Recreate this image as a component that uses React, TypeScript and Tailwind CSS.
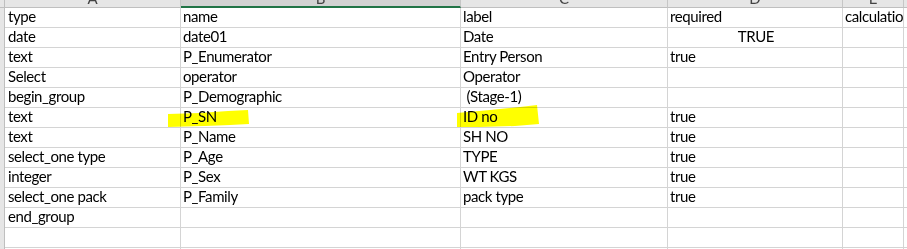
import React from "react";

const rows: [string, string, string, string, string][] = [
  ["type", "name", "label", "required", "calculation"],
  ["date", "date01", "Date", "TRUE", ""],
  ["text", "P_Enumerator", "Entry Person", "true", ""],
  ["Select", "operator", "Operator", "", ""],
  ["begin_group", "P_Demographic", " (Stage-1)", "", ""],
  ["text", "P_SN", "ID no", "true", ""],
  ["text", "P_Name", "SH NO", "true", ""],
  ["select_one type", "P_Age", "TYPE", "true", ""],
  ["integer", "P_Sex", "WT KGS", "true", ""],
  ["select_one pack", "P_Family", "pack type", "true", ""],
  ["end_group", "", "", "", ""],
  ["", "", "", "", ""],
  ["", "", "", "", ""],
];

const widths = ["w-[176px]", "w-[280px]", "w-[207px]", "w-[175px]", "w-[61px]"];
const letters = ["A", "B", "C", "D", "E"];

export default function App() {
  return (
    <div
      className="relative w-[907px] h-[249px] overflow-hidden bg-white text-black"
      style={{ fontFamily: "Lato, 'Open Sans', sans-serif" }}
    >
      {/* header row */}
      <div className="flex h-[8px]">
        <div className="w-[5px] shrink-0 bg-[#e6e6e6] border-r border-b border-[#bfbfbf]" />
        {letters.map((l, i) => (
          <div
            key={l}
            className={`${widths[i]} shrink-0 flex justify-center overflow-hidden border-r border-[#c6c6c6] ${
              i === 1 ? "bg-[#d2d2d2] border-b-2 border-b-[#217346]" : "bg-[#e6e6e6] border-b border-b-[#bfbfbf]"
            }`}
          >
            <span className="text-[15px] leading-[15px] mt-[-9px] text-[#444]">{l}</span>
          </div>
        ))}
        <div className="flex-1 bg-[#e6e6e6] border-b border-[#bfbfbf]" />
      </div>
      {rows.map((r, ri) => (
        <div key={ri} className="flex h-[20px]">
          <div className="w-[5px] shrink-0 bg-[#e6e6e6] border-r border-[#bfbfbf]" />
          {r.map((c, ci) => (
            <div
              key={ci}
              className={`${widths[ci]} shrink-0 h-[20px] border-r border-b border-[#d4d4d4] overflow-hidden whitespace-pre flex items-end pb-[2px] text-[15px] leading-[17px] tracking-[-0.4px] ${
                ci === 0 ? "pl-[3px]" : "pl-[2px]"
              } ${ri === 1 && ci === 3 ? "justify-center" : ""}`}
            >
              {c}
            </div>
          ))}
          <div className="flex-1 border-b border-[#d4d4d4]" />
        </div>
      ))}
      {/* highlighter marks */}
      <svg className="absolute left-0 top-0 mix-blend-multiply pointer-events-none" width="907" height="249">
        <path
          d="M168 114 L200 113 L228 111 L248 110 L249 124 L230 125 L205 126 L168 127 Z"
          fill="#ffff00"
        />
        <path
          d="M457 113 L490 110 L520 107 L537 105 L539 124 L515 126 L480 127 L457 127 Z"
          fill="#ffff00"
        />
      </svg>
    </div>
  );
}
